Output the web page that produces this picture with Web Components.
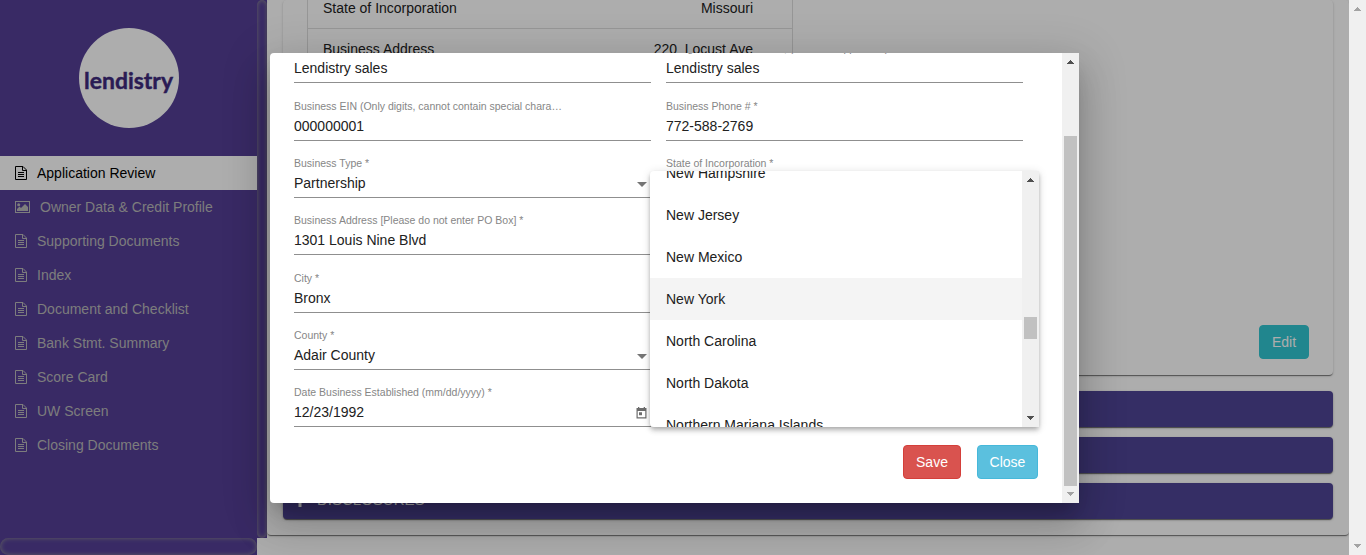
<!DOCTYPE html>
<html lang="en">
<head>
<meta charset="utf-8">
<title>Application Review</title>
<style>
html,body{margin:0;height:100%;overflow:hidden}
body{font:14px/20px "Liberation Sans",Arial,sans-serif;color:#212121;background:#fff}
</style>
</head>
<body>
<loan-app></loan-app>
<script>
const define = (name, html, setup) => {
  customElements.define(name, class extends HTMLElement {
    connectedCallback() {
      if (this.shadowRoot) return;
      const t = document.createElement('template');
      t.innerHTML = '<style>*{box-sizing:border-box}:host{box-sizing:border-box}</style>' + (typeof html === 'function' ? html(this) : html);
      this.attachShadow({mode: 'open'}).append(t.content.cloneNode(true));
      if (setup) setup(this);
    }
  });
};

/* Classic scrollbar: before/thumb give the thumb's place along the track */
define('scroll-bar', el => `
<style>
:host{display:flex;flex-direction:column;width:17px;background:#f0f0f0;flex:none}
svg{display:block;width:17px;height:17px;flex:none;shape-rendering:crispEdges}
.track{flex:1;padding:0 2px}
.thumb{background:#c1c1c1;margin-top:${el.getAttribute('before') || 0}px;height:${el.getAttribute('thumb') || 0}px}
</style>
<svg fill="${el.getAttribute('up') || '#505050'}"><path d="M8 7h1v1h1v1h1v1h1v1H5v-1h1V9h1V8h1z"/></svg>
<div class="track"><div class="thumb"></div></div>
<svg fill="${el.getAttribute('down') || '#505050'}"><path d="M5 6h7v1h-1v1h-1v1H9v1H8V9H7V8H6V7H5z"/></svg>`);

define('file-icon', `
<style>:host{display:block;width:12px;height:14px}svg{display:block}</style>
<svg width="12" height="14" viewBox="0 0 12 14" fill="none" stroke="currentColor"><path d="M.5.5H8L11.5 4v9.500H.5zM7.500.5v4h4M3 6.500h6M3 8.500h6M3 10.500h6"/></svg>`);

define('image-icon', `
<style>:host{display:block;width:15px;height:14px}svg{display:block}</style>
<svg width="15" height="14" viewBox="0 0 15 14"><rect x=".5" y="1.500" width="14" height="11" fill="none" stroke="currentColor"/><circle cx="3.700" cy="4.700" r="1.500" fill="currentColor"/><path d="M2 11V9l2.500-2.500L6 8l4-4 3 3v4z" fill="currentColor"/></svg>`);

define('nav-item', el => `
<style>
:host{display:flex;align-items:center;height:34px;padding-left:15px;color:#b8b8b8}
:host([active]){background:#fff;color:#000}
span{margin-left:10px}
</style>
${el.hasAttribute('image') ? '<image-icon></image-icon>' : '<file-icon></file-icon>'}<span><slot></slot></span>`);

define('brand-logo', `
<style>
:host{display:block;width:100px;height:100px;border-radius:50%;background:#fff}
svg{display:block}
text{font:700 23px Lato,sans-serif;fill:#3e2a7d;stroke:#3e2a7d;stroke-width:.4px}
</style>
<svg width="100" height="100"><text x="5" y="61" textLength="89" lengthAdjust="spacingAndGlyphs">lendistry</text></svg>`);

define('side-bar', `
<style>
:host{display:grid;grid-template:538px 17px / 257px 10px;width:267px}
.menu{background:#543f96;padding-top:28px}
brand-logo{margin:0 auto 28px 79px}
.v,.h{background:#543f96}
.v i,.h i{display:block;height:100%;border-radius:10px;box-shadow:inset 0 0 5px #909090}
</style>
<div class="menu"><brand-logo></brand-logo>
<nav-item active>Application Review</nav-item>
<nav-item image>Owner Data &amp; Credit Profile</nav-item>
<nav-item>Supporting Documents</nav-item>
<nav-item>Index</nav-item>
<nav-item>Document and Checklist</nav-item>
<nav-item>Bank Stmt. Summary</nav-item>
<nav-item>Score Card</nav-item>
<nav-item>UW Screen</nav-item>
<nav-item>Closing Documents</nav-item></div>
<div class="v"><i></i></div><div class="h"><i></i></div>`);

define('detail-row', `
<style>:host{display:flex;justify-content:space-between;align-items:center;height:41px;padding:0 39px 0 15px;border-top:1px solid #ddd;white-space:pre}</style>
<slot name="k"></slot><slot></slot>`);

define('section-bar', `
<style>
:host{display:flex;align-items:center;height:36px;border-radius:4px;background:#4e4496;color:#fff;font-size:15px;padding-left:12px;box-shadow:0 2px 1px -1px rgba(0,0,0,.3),0 1px 1px rgba(0,0,0,.3),0 1px 3px rgba(0,0,0,.2)}
svg{margin-right:12px}
span{position:relative;top:-1px}
</style>
<svg width="10" height="12" fill="currentColor"><path d="M3.500 0h3v4.500H10v3H6.500V12h-3V7.500H0v-3h3.500z"/></svg><span><slot></slot></span>`);

define('app-button', `
<style>:host{display:flex;align-items:center;justify-content:center;height:34px;border-radius:4px;color:#fff;font-size:14px;border:1px solid}
:host([kind=edit]){width:50px;background:#32c6d1;border-color:#32c6d1}
:host([kind=save]){width:58px;background:#d9534f;border-color:#d43f3a}
:host([kind=close]){width:61px;background:#5bc0de;border-color:#46b8da}
span{color:#fff}</style><span><slot></slot></span>`);

define('review-page', `
<style>
:host{display:block;flex:1;min-width:0}
.outer,.inner{border-radius:4px;box-shadow:0 2px 1px -1px rgba(0,0,0,.3),0 1px 1px rgba(0,0,0,.25),0 1px 3px rgba(0,0,0,.14)}
.outer{height:535px;padding:0 16px;display:flex;flex-direction:column;gap:10px}
.inner{height:375px;margin-bottom:6px;padding:0 24px;display:flex;flex-direction:column;justify-content:space-between}
.table{width:486px;border:1px solid #ddd;border-top:0;margin-top:-13px}
app-button{align-self:flex-end;margin-bottom:16px}
</style>
<div class="outer">
<div class="inner"><div class="table">
<detail-row><span slot="k">State of Incorporation</span>Missouri</detail-row>
<detail-row><span slot="k">Business Address</span>220  Locust Ave</detail-row>
</div><app-button kind="edit">Edit</app-button></div>
<section-bar></section-bar><section-bar></section-bar><section-bar>DISCLOSURES</section-bar>
</div>`);

define('form-field', el => `
<style>
:host{display:flex;flex-direction:column;justify-content:flex-end;min-width:0;border-bottom:1px solid #8f8f8f;padding-bottom:4px}
label{font-size:10.5px;line-height:14px;color:#868686;margin-bottom:3px;width:272px;white-space:nowrap;overflow:hidden;text-overflow:ellipsis}
.row{display:flex;justify-content:space-between;height:20px;line-height:20px}
svg{display:block;margin-top:3px}
</style>
${el.hasAttribute('label') ? `<label>${el.getAttribute('label')}</label>` : ''}
<div class="row"><slot></slot>${{
  select: '<svg width="14" height="14" fill="#757575"><path d="M0 6h10L5 11z"/></svg>',
  date: '<svg width="16" height="16" viewBox="0 0 16 16"><path d="M2 3h1V2h1.300v1h4.400V2H10v1h1.500v10.500h-10V3zM2.700 6v6.300h7.600V6zM4 7.200h3v3H4z" fill="#6c6c6c" fill-rule="evenodd"/></svg>'
}[el.getAttribute('icon')] || ''}</div>`);

define('option-list', `
<style>
:host{display:flex;width:389px;height:256px;background:#fff;border-radius:4px 0 0 4px;overflow:hidden;box-shadow:0 2px 4px -1px rgba(0,0,0,.2),0 4px 5px rgba(0,0,0,.14),0 1px 10px rgba(0,0,0,.12)}
.list{flex:1;overflow:hidden}
.inner{margin-top:-19px}
.o{height:42px;line-height:42px;padding-left:16px}
.on{background:#f4f4f4}
</style>
<div class="list"><div class="inner">
<div class="o">New Hampshire</div><div class="o">New Jersey</div><div class="o">New Mexico</div><div class="o on">New York</div><div class="o">North Carolina</div><div class="o">North Dakota</div><div class="o">Northern Mariana Islands</div>
</div></div>
<scroll-bar before="129" thumb="22"></scroll-bar>`);

define('edit-dialog', `
<style>
:host{display:flex;width:809px;height:450px;background:#fff;border-radius:4px 0 0 4px;box-shadow:0 11px 15px -7px rgba(0,0,0,.2),0 24px 38px 3px rgba(0,0,0,.14),0 9px 46px 8px rgba(0,0,0,.12)}
.body{flex:1;padding:0 39px 0 24px;overflow:hidden}
.form{display:grid;grid-template-columns:357px 357px;grid-template-rows:57px 58px 57px 57px 58px 57px 57px;column-gap:15px;margin-top:-27px}
.actions{display:flex;justify-content:flex-end;gap:16px;margin-top:18px;width:744px}
</style>
<div class="body"><div class="form">
<form-field label="Business Name *">Lendistry sales</form-field><form-field label="Doing Business As / DBA, (if it is not applicable) *">Lendistry sales</form-field>
<form-field label="Business EIN (Only digits, cannot contain special characters) *">000000001</form-field><form-field label="Business Phone # *">772-588-2769</form-field>
<form-field label="Business Type *" icon="select">Partnership</form-field><form-field label="State of Incorporation *">&nbsp;</form-field>
<form-field label="Business Address [Please do not enter PO Box] *">1301 Louis Nine Blvd</form-field><form-field></form-field>
<form-field label="City *">Bronx</form-field><form-field></form-field>
<form-field label="County *" icon="select">Adair County</form-field><form-field></form-field>
<form-field label="Date Business Established (mm/dd/yyyy) *" icon="date">12/23/1992</form-field><form-field></form-field>
</div>
<div class="actions"><app-button kind="save">Save</app-button><app-button kind="close">Close</app-button></div></div>
<scroll-bar before="66" thumb="350" down="#a3a3a3"></scroll-bar>`);

define('loan-app', `
<style>
:host{display:flex;position:relative;width:1366px;height:555px;overflow:hidden}
.backdrop{position:absolute;inset:0;background:rgba(0,0,0,.32)}
.screen{display:flex;position:relative;width:1349px;height:555px;overflow:hidden}
edit-dialog{position:absolute;left:270px;top:53px}
option-list{position:absolute;left:650px;top:171px}
</style>
<div class="screen"><side-bar></side-bar><review-page></review-page>
<div class="backdrop"></div><edit-dialog></edit-dialog><option-list></option-list></div>
<scroll-bar up="#a3a3a3" down="#a3a3a3"></scroll-bar>`);
</script>
</body>
</html>
